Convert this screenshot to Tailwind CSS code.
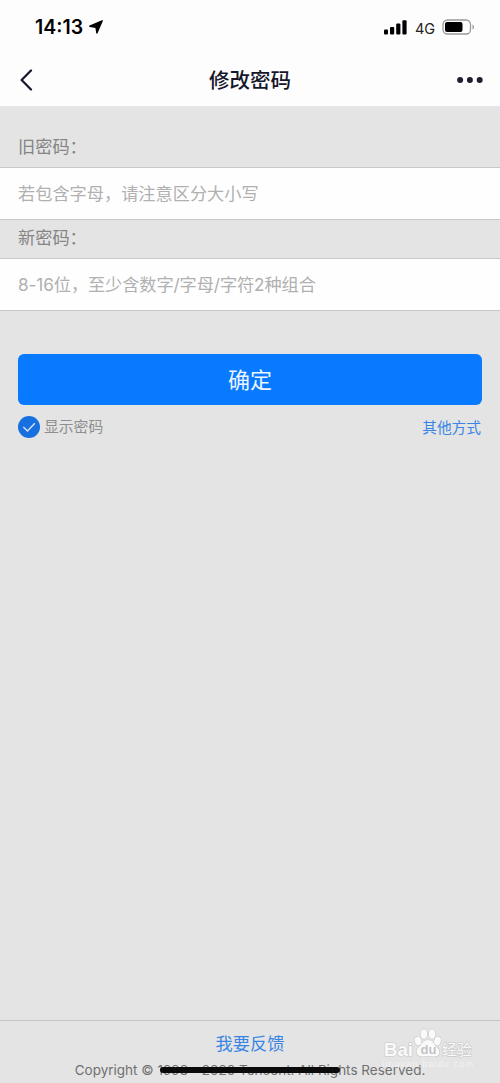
<!DOCTYPE html>
<html lang="zh-CN">
<head>
<meta charset="utf-8">
<meta name="viewport" content="width=device-width, initial-scale=1">
<title>修改密码</title>
<script src="https://cdn.jsdelivr.net/npm/@tailwindcss/browser@4"></script>
</head>
<body class="bg-[#e4e4e4]">
<div class="relative flex h-[1083px] w-[500px] flex-col overflow-hidden bg-[#e4e4e4] font-['Inter','Noto_Sans_CJK_SC',sans-serif]">
  <header class="h-[108px] shrink-0 border-b-2 border-[#e4e4e9] bg-[#fdfdfd]">
    <div class="flex h-[54px] items-center pl-[35px] pr-[25px] text-black">
      <span class="mt-[2px] w-[49px] whitespace-nowrap text-[19.500px] font-semibold">14:13</span>
      <svg class="ml-[5px] h-[14px] w-[14px]" viewBox="0 0 14 14"><path d="M13.2.8 7.900 13 7 7.400.8 6.200Z" fill="#000" stroke="#000" stroke-width="1.400" stroke-linejoin="round"/></svg>
      <svg class="ml-auto h-[15px] w-[23px]" viewBox="0 0 23 15"><rect y="9.5" width="4" height="5" rx="1"/><rect x="6" y="7" width="4.2" height="7.500" rx="1"/><rect x="12.200" y="3.500" width="4.200" height="11" rx="1"/><rect x="18.400" y=".2" width="4.200" height="14.300" rx="1"/></svg>
      <span class="ml-[8px] mt-[3px] w-[20px] whitespace-nowrap text-[14.500px] leading-5 text-[#222]">4G</span>
      <svg class="ml-[7px] h-[16px] w-[33px]" viewBox="0 0 33 16"><rect x="1" y="1" width="27.500" height="14" rx="4.500" fill="#fff" stroke="#999" stroke-width="1.300"/><rect x="3" y="3" width="17.500" height="10" rx="2"/><path d="M30.500 5.500Q32 6 32 8T30.500 10.500Z" fill="#999"/></svg>
    </div>
    <div class="grid h-[52px] grid-cols-3 items-center pl-5 pr-[17px]">
      <svg class="h-[22px] w-[13px]" viewBox="0 0 13 22" fill="none" stroke="#16162a" stroke-width="2.200" stroke-linecap="round" stroke-linejoin="round"><path d="M11 1.500 1.600 11 11 20.500"/></svg>
      <h1 class="mr-[3px] mt-[2px] whitespace-nowrap text-center text-[20.5px] font-medium leading-[30px] text-[#16162a]">修改密码</h1>
      <svg class="h-[6px] w-[26px] justify-self-end" viewBox="0 0 26 6" fill="#1e1e30"><circle cx="3.100" cy="3" r="3"/><circle cx="12.900" cy="3" r="3"/><circle cx="22.700" cy="3" r="3"/></svg>
    </div>
  </header>

  <main class="flex-1">
    <div class="flex h-[59px] items-end px-[18px] pb-[7px] text-[17.200px] leading-[26px] text-[#858585]">旧密码：</div>
    <div class="flex h-[53px] items-center border-y border-[#c8c8c8] bg-[#fefefe] px-[18px] text-[17.200px] text-[#b0b0b0]">若包含字母，请注意区分大小写</div>
    <div class="flex h-[38px] items-center px-[18px] pb-[3px] text-[17.200px] leading-[26px] text-[#858585]">新密码：</div>
    <div class="flex h-[53px] items-center border-y border-[#c8c8c8] bg-[#fefefe] px-[18px] text-[17.200px] tracking-[-0.090px] text-[#b0b0b0]">8-16位，至少含数字/字母/字符2种组合</div>
    <div class="px-[18px] pt-[43px]">
      <button class="block h-[51px] w-full rounded-md bg-[#087aff] pt-px text-[22px] leading-[51px] text-[#edf4ff]">确定</button>
      <div class="mt-[10px] flex h-6 items-center text-[14.800px]">
        <svg class="h-[22px] w-[22px]" viewBox="0 0 22 22"><circle cx="11" cy="11" r="11" fill="#1870e0"/><path d="m5.300 11 4.200 4 7.300-7.800" fill="none" stroke="#d6e5f8" stroke-width="1.300"/></svg>
        <span class="ml-1 text-[#8e8e8e]">显示密码</span>
        <a class="ml-auto mr-px mt-[2px] text-[14.700px] text-[#3a84e4]">其他方式</a>
      </div>
    </div>
  </main>

  <footer class="h-[63px] shrink-0 border-t border-[#c5c5c5] pt-[10px] text-center">
    <a class="block text-[17.200px] leading-[26px] text-[#3a84e4]">我要反馈</a>
    <p class="mt-[3px] whitespace-nowrap text-[13.500px] leading-5 text-[#707070]">Copyright © 1998 - 2020 Tencent. All Rights Reserved.</p>
  </footer>
  <div class="absolute left-[160px] top-[1067px] h-[6px] w-[180px] rounded-full bg-[#0b0b0b]"></div>

  <svg class="absolute left-[380px] top-[1025px] h-[46px] w-[100px]" viewBox="0 0 100 46" fill="#fafafa" stroke="#c8c8c8" stroke-width="1.200" paint-order="stroke" stroke-linejoin="round" font-family="'Liberation Sans','Noto Sans CJK SC',sans-serif">
    <text x="4" y="31" font-size="19" font-weight="bold" textLength="29" lengthAdjust="spacingAndGlyphs">Bai</text>
    <ellipse cx="38" cy="16" rx="3.300" ry="4.500" transform="rotate(-15 38 16)"/>
    <ellipse cx="43.800" cy="9" rx="3.300" ry="4.800"/>
    <ellipse cx="52" cy="9" rx="3.300" ry="4.800"/>
    <ellipse cx="57.500" cy="16" rx="3.300" ry="4.500" transform="rotate(15 57.500 16)"/>
    <path d="M48 15C43 15 41.500 20 38.500 22.500C34.500 26 37 32 42 31.500Q48 30.500 54 31.500C60 32 61 26 57 22.500C54 20 53 15 48 15Z"/>
    <text x="40.500" y="29" font-size="13" font-weight="bold" fill="#c4c4c4" stroke="none">du</text>
    <text x="62" y="30" font-size="15" textLength="30">经验</text>
    <text x="2" y="41.500" font-size="9" textLength="91" fill="#f2f2f2" stroke="none">jingyan.baidu.com</text>
  </svg>
</div>
</body>
</html>
